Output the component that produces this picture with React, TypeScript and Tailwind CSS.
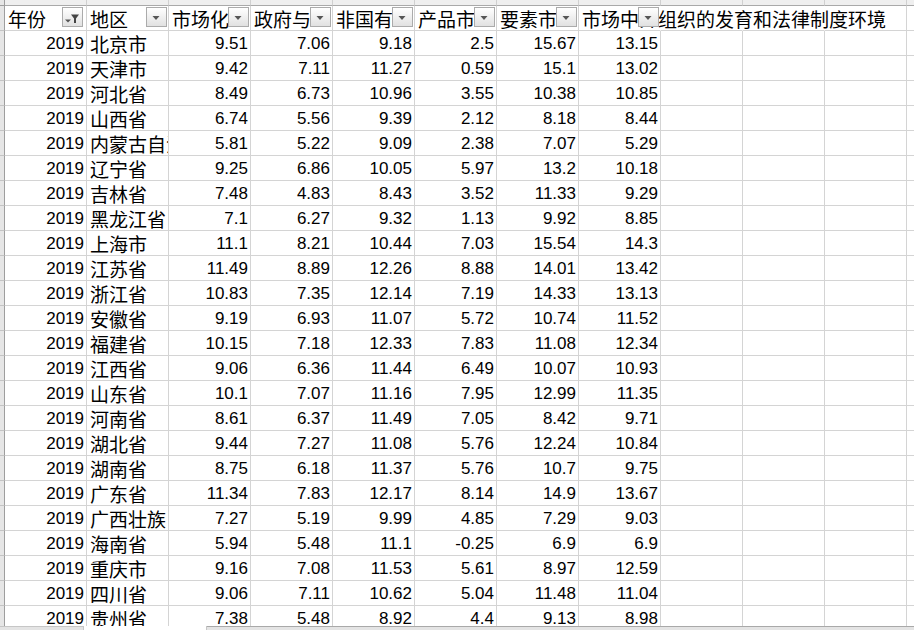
import clsx from "clsx"

const cjk = "font-['Noto_Sans_CJK_SC',sans-serif] text-[19px]"
const num = "font-['Liberation_Sans',Arial,sans-serif] text-[17px]"

const headers = ["年份", "地区", "市场化", "政府与", "非国有", "产品市", "要素市", "市场中介组织的发育和法律制度环境"]

const rows: string[][] = [
  ["北京市", "9.51", "7.06", "9.18", "2.5", "15.67", "13.15"],
  ["天津市", "9.42", "7.11", "11.27", "0.59", "15.1", "13.02"],
  ["河北省", "8.49", "6.73", "10.96", "3.55", "10.38", "10.85"],
  ["山西省", "6.74", "5.56", "9.39", "2.12", "8.18", "8.44"],
  ["内蒙古自治区", "5.81", "5.22", "9.09", "2.38", "7.07", "5.29"],
  ["辽宁省", "9.25", "6.86", "10.05", "5.97", "13.2", "10.18"],
  ["吉林省", "7.48", "4.83", "8.43", "3.52", "11.33", "9.29"],
  ["黑龙江省", "7.1", "6.27", "9.32", "1.13", "9.92", "8.85"],
  ["上海市", "11.1", "8.21", "10.44", "7.03", "15.54", "14.3"],
  ["江苏省", "11.49", "8.89", "12.26", "8.88", "14.01", "13.42"],
  ["浙江省", "10.83", "7.35", "12.14", "7.19", "14.33", "13.13"],
  ["安徽省", "9.19", "6.93", "11.07", "5.72", "10.74", "11.52"],
  ["福建省", "10.15", "7.18", "12.33", "7.83", "11.08", "12.34"],
  ["江西省", "9.06", "6.36", "11.44", "6.49", "10.07", "10.93"],
  ["山东省", "10.1", "7.07", "11.16", "7.95", "12.99", "11.35"],
  ["河南省", "8.61", "6.37", "11.49", "7.05", "8.42", "9.71"],
  ["湖北省", "9.44", "7.27", "11.08", "5.76", "12.24", "10.84"],
  ["湖南省", "8.75", "6.18", "11.37", "5.76", "10.7", "9.75"],
  ["广东省", "11.34", "7.83", "12.17", "8.14", "14.9", "13.67"],
  ["广西壮族自治区", "7.27", "5.19", "9.99", "4.85", "7.29", "9.03"],
  ["海南省", "5.94", "5.48", "11.1", "-0.25", "6.9", "6.9"],
  ["重庆市", "9.16", "7.08", "11.53", "5.61", "8.97", "12.59"],
  ["四川省", "9.06", "7.11", "10.62", "5.04", "11.48", "11.04"],
  ["贵州省", "7.38", "5.48", "8.92", "4.4", "9.13", "8.98"],
]

function FilterButton({ filtered }: { filtered?: boolean }) {
  return (
    <div
      className={clsx(
        "absolute top-[1px] z-10 h-[20px] w-[21px] border border-[#ababab] bg-linear-to-b from-white to-[#e1e1e1]",
        filtered ? "right-[3px]" : "right-[1px]"
      )}
    >
      {filtered ? (
        <svg width="19" height="18" viewBox="0 0 19 18">
          <polygon points="2,11.5 8,11.5 5,14.5" fill="#555" />
          <polygon points="8,6.5 16,6.5 13,10.5 13,15 11,15 11,10.5" fill="#444" />
        </svg>
      ) : (
        <svg width="19" height="18" viewBox="0 0 19 18">
          <polygon points="5.5,8 12.5,8 9,12" fill="#555" />
        </svg>
      )}
    </div>
  )
}

function RowHead({ h }: { h: string }) {
  return <div className={clsx("w-[5px] shrink-0 border-r border-b border-r-[#9e9e9e] border-b-[#c4c4c4] bg-[#e6e6e6]", h)} />
}

export default function App() {
  return (
    <div className="flex h-[630px] w-[914px] flex-col overflow-hidden bg-white text-black">
      <div className="flex-1 overflow-hidden">
        {/* column header strip, cut off at the top */}
        <div className="flex">
          <div className="h-[6px] w-[5px] shrink-0 border-r border-b border-[#9e9e9e] bg-[#e6e6e6]" />
          {Array.from({ length: 11 }).map((_, i) => (
            <div key={i} className="h-[6px] w-[82px] shrink-0 border-r border-b border-r-[#d0d0d0] border-b-[#a9a9a9] bg-[#efefef]" />
          ))}
          <div className="h-[6px] flex-1 border-b border-[#a9a9a9] bg-[#efefef]" />
        </div>

        {/* header row */}
        <div className="flex">
          <RowHead h="h-[25px]" />
          {headers.map((t, i) => (
            <div
              key={i}
              className={clsx(
                "relative flex h-[25px] w-[82px] shrink-0 items-end border-r border-b border-[#d4d4d4] pb-[1px] pl-[3px]",
                cjk,
                i === 7 ? "overflow-visible border-r-transparent" : "overflow-hidden"
              )}
            >
              <span className="whitespace-nowrap leading-[20px]">{t}</span>
              <FilterButton filtered={i === 0} />
            </div>
          ))}
          <div className="h-[25px] w-[82px] shrink-0 border-r border-b border-[#d4d4d4] border-r-transparent" />
          <div className="h-[25px] w-[82px] shrink-0 border-r border-b border-[#d4d4d4] border-r-transparent" />
          <div className="h-[25px] w-[82px] shrink-0 border-r border-b border-[#d4d4d4]" />
          <div className="h-[25px] flex-1 border-b border-[#d4d4d4]" />
        </div>

        {/* data rows */}
        {rows.map((r, ri) => (
          <div key={ri} className="flex">
            <RowHead h="h-[25px]" />
            <div className={clsx("flex h-[25px] w-[82px] shrink-0 items-end justify-end border-r border-b border-[#d4d4d4] pr-[2px] pb-[1px]", num)}>
              <span className="leading-[20px]">2019</span>
            </div>
            <div className={clsx("flex h-[25px] w-[82px] shrink-0 items-end overflow-hidden border-r border-b border-[#d4d4d4] pl-[3px] pb-[1px]", cjk)}>
              <span className="whitespace-nowrap leading-[20px]">{r[0]}</span>
            </div>
            {r.slice(1).map((v, ci) => (
              <div
                key={ci}
                className={clsx("flex h-[25px] w-[82px] shrink-0 items-end justify-end border-r border-b border-[#d4d4d4] pr-[2px] pb-[1px]", num)}
              >
                <span className="leading-[20px]">{v}</span>
              </div>
            ))}
            {[0, 1, 2, 3].map((k) => (
              <div key={k} className="h-[25px] w-[82px] shrink-0 border-r border-b border-[#d4d4d4]" />
            ))}
          </div>
        ))}
      </div>

      {/* sheet tab bar, cut off at the bottom */}
      <div className="flex h-[4px] shrink-0">
        <div className="w-[83px] border-t border-[#c6c6c6] bg-[#e4e4e4]" />
        <div className="w-[124px] border-x border-[#c6c6c6] bg-white" />
        <div className="flex-1 border-t border-[#a9a9a9] bg-[#e4e4e4]" />
      </div>
    </div>
  )
}
